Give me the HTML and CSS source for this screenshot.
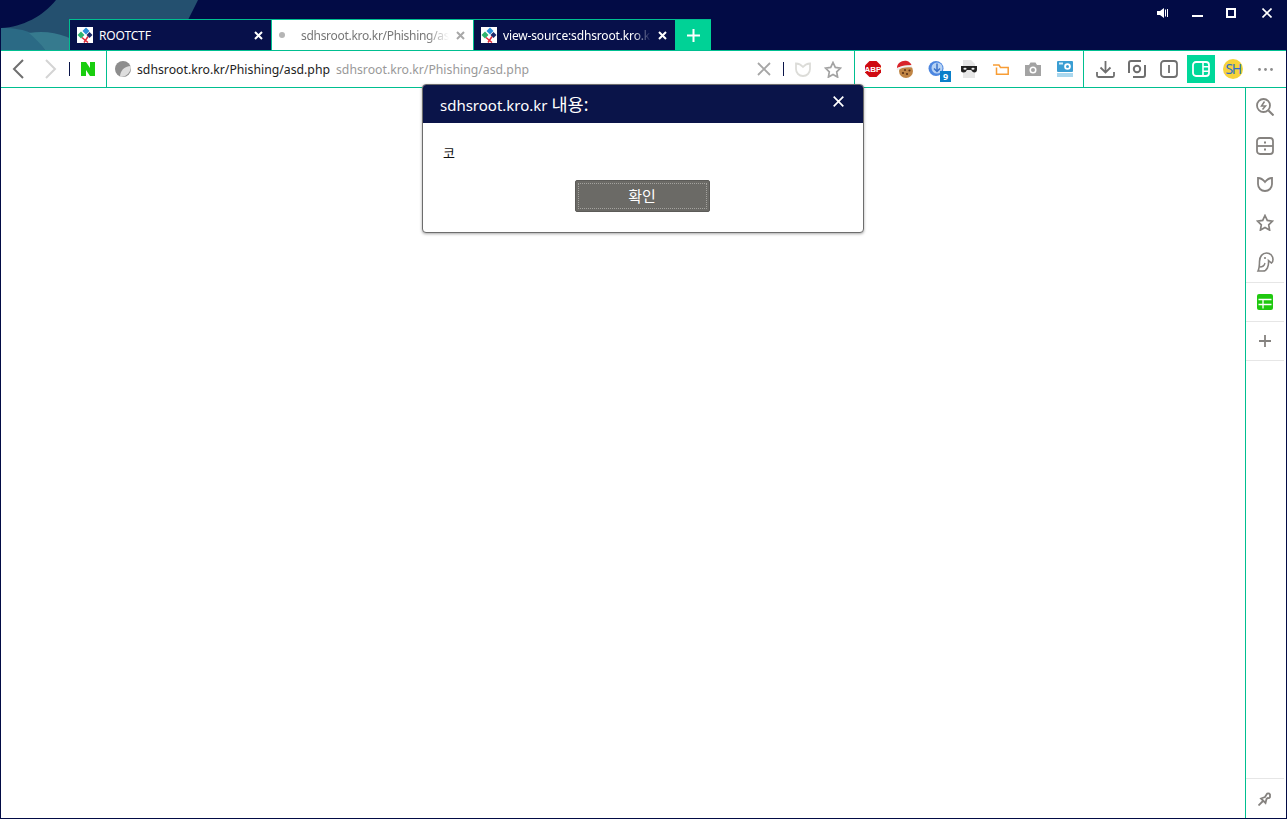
FILE: index.html
```html
<!DOCTYPE html>
<html lang="ko">
<head>
<meta charset="utf-8">
<title>Browser</title>
<link rel="stylesheet" href="styles.css">
</head>
<body>
<div class="window">
  <header class="titlebar">
    <svg class="skin" width="200" height="50" viewBox="0 0 200 50">
      <path d="M55 0H197C193 8 190 14 186 22L168 50H0V28C22 27 42 16 55 0Z" fill="#24506f"/>
      <path d="M0 28C14 28 24 30 30 33 36 38 40 44 44 50H0Z" fill="#2b6a85"/>
      <path d="M28 33C50 29 70 36 90 50H44C40 44 34 38 28 33Z" fill="#367a8e"/>
    </svg>
    <div class="tabs">
      <div class="tab tab-dark">
        <svg class="favicon" width="16" height="16" viewBox="0 0 16 16"><rect width="16" height="16" fill="#fff"/><path d="M0.500 8l3.500-3.500L7.500 8 4 11.500z" fill="#2fb36f"/><path d="M5.500 4l3.500-3.500L12.500 4 9 7.500z" fill="#2a8fd8"/><path d="M9.500 8l3-3 3 3-3 3z" fill="#1c2a6b"/><path d="M5 10.500l6 5M11 9.500l-4 6" stroke="#e02a3a" stroke-width="1.500"/></svg>
        <span class="tab-label">ROOTCTF</span>
        <svg class="tab-close" width="9" height="9" viewBox="0 0 9 9"><path d="M1 1l7 7M8 1L1 8" stroke="#fff" stroke-width="2"/></svg>
      </div>
      <div class="tab tab-light">
        <span class="loading-dot"></span>
        <span class="tab-label fade-light">sdhsroot.kro.kr/Phishing/asd.php</span>
        <svg class="tab-close" width="9" height="9" viewBox="0 0 9 9"><path d="M1 1l7 7M8 1L1 8" stroke="#a8a8a8" stroke-width="2"/></svg>
      </div>
      <div class="tab tab-dark">
        <svg class="favicon" width="16" height="16" viewBox="0 0 16 16"><rect width="16" height="16" fill="#fff"/><path d="M0.500 8l3.500-3.500L7.500 8 4 11.500z" fill="#2fb36f"/><path d="M5.500 4l3.500-3.500L12.500 4 9 7.500z" fill="#2a8fd8"/><path d="M9.500 8l3-3 3 3-3 3z" fill="#1c2a6b"/><path d="M5 10.500l6 5M11 9.500l-4 6" stroke="#e02a3a" stroke-width="1.500"/></svg>
        <span class="tab-label fade-dark">view-source:sdhsroot.kro.kr/Phishing/asd.php</span>
        <svg class="tab-close" width="9" height="9" viewBox="0 0 9 9"><path d="M1 1l7 7M8 1L1 8" stroke="#fff" stroke-width="2"/></svg>
      </div>
      <div class="tab-add">
        <svg width="13" height="13" viewBox="0 0 13 13"><path d="M6.500 0v13M0 6.500h13" stroke="#fff" stroke-width="2"/></svg>
      </div>
    </div>
    <div class="win-controls">
      <svg class="win-vol" width="12" height="10" viewBox="0 0 12 10"><path d="M0 3h3l4-3v10L3 7H0z" fill="#fff"/><path d="M8.500 1.500v7M10.500 1v8" stroke="#fff" stroke-width="1"/></svg>
      <svg class="win-min" width="11" height="2" viewBox="0 0 11 2"><rect width="11" height="2" fill="#fff"/></svg>
      <svg class="win-max" width="10" height="10" viewBox="0 0 10 10"><rect x="1" y="1" width="8" height="8" fill="none" stroke="#fff" stroke-width="2"/></svg>
      <svg class="win-close" width="10" height="10" viewBox="0 0 10 10"><path d="M.5.500l9 9M9.500.500l-9 9" stroke="#fff" stroke-width="1.600"/></svg>
    </div>
  </header>

  <nav class="toolbar">
    <div class="nav-group">
      <span class="nav-btn">
        <svg width="14" height="20" viewBox="0 0 14 20"><path d="M12 1L3 10l9 9" fill="none" stroke="#6f6f6f" stroke-width="2"/></svg>
      </span>
      <span class="nav-btn">
        <svg width="14" height="20" viewBox="0 0 14 20"><path d="M2 1l9 9-9 9" fill="none" stroke="#d4d4d4" stroke-width="2"/></svg>
      </span>
      <span class="divider"></span>
      <svg class="naver" width="14" height="14" viewBox="0 0 14 14"><path d="M0 0h5l4 6V0h5v14H9L5 8v6H0z" fill="#19ce0f"/></svg>
    </div>
    <div class="address">
      <svg class="site-icon" width="16" height="16" viewBox="0 0 16 16"><circle cx="8" cy="8" r="8" fill="#8d8d8d"/><path d="M5 16c0-6 4-11 11-11 0 6-4 11-11 11z" fill="#dedede"/></svg>
      <span class="url">sdhsroot.kro.kr/Phishing/asd.php</span>
      <span class="url-hint">sdhsroot.kro.kr/Phishing/asd.php</span>
      <span class="spacer"></span>
      <svg class="addr-x" width="14" height="14" viewBox="0 0 14 14"><path d="M1 1l12 12M13 1L1 13" stroke="#a6a6a6" stroke-width="1.800"/></svg>
      <span class="divider addr-div"></span>
      <svg class="addr-shield" width="16" height="15" viewBox="0 0 16 15"><path d="M1 1.500c2.500 0 5 1.200 7 3.500 2-2.300 4.500-3.500 7-3.500v5.500c0 4-3 7-7 7s-7-3-7-7z" fill="none" stroke="#dcdcd8" stroke-width="1.800"/></svg>
      <svg class="addr-star" width="18" height="17" viewBox="0 0 18 17"><path d="M9 1.500l2.300 4.900 5.200.7-3.800 3.700.9 5.300L9 13.500l-4.600 2.600.9-5.300L1.500 7.100l5.200-.7z" fill="none" stroke="#a3a3a3" stroke-width="1.700"/></svg>
    </div>
    <div class="ext-group">
      <span class="tool"><svg width="18" height="18" viewBox="0 0 18 18"><path d="M5.500 1h7L17 5.500v7L12.500 17h-7L1 12.500v-7z" fill="#cf0a12"/><text x="9" y="12" class="abp-text">ABP</text></svg></span>
      <span class="tool"><svg width="18" height="18" viewBox="0 0 18 18"><circle cx="10" cy="11" r="7" fill="#c08545"/><circle cx="7" cy="13" r="1.100" fill="#5c3216"/><circle cx="11" cy="14" r="1.100" fill="#5c3216"/><circle cx="13.500" cy="10.500" r="1.100" fill="#5c3216"/><circle cx="9" cy="10" r="1" fill="#5c3216"/><path d="M1 8C1 3 6 0 11 1c2 .5 3.500 2 4.500 4C10 4.500 5 6 1 8z" fill="#d8232a"/><path d="M0.500 8.500C5 5.500 11 4.500 16 5.500V7.500C11 6.500 5 7.500 1 10.500z" fill="#eee"/></svg></span>
      <span class="tool badge-host"><svg width="18" height="18" viewBox="0 0 18 18"><circle cx="8" cy="8.500" r="7.500" fill="#4c86e0"/><circle cx="9" cy="8" r="5.500" fill="#b6d2f4"/><path d="M9 3.500v7M6 8.500l3 3 3-3" fill="none" stroke="#3a71c8" stroke-width="1.500"/></svg><span class="badge">9</span></span>
      <span class="tool"><svg width="18" height="18" viewBox="0 0 18 18"><path d="M3 0h8l4 4v14H3z" fill="#e6e6e6"/><path d="M1 6h16v3.500c0 2-1 3-2.500 3S12 11 11 10H7c-1 1-1 2.500-3.500 2.500S1 11.500 1 9.500z" fill="#222"/><ellipse cx="5" cy="8.800" rx="1.600" ry="1" fill="#eee"/><ellipse cx="13" cy="8.800" rx="1.600" ry="1" fill="#eee"/></svg></span>
      <span class="tool"><svg width="16" height="11" viewBox="0 0 16 11"><path d="M0 1h6l1.500 2.500H15.200V10.200H3.500V3.500" fill="none" stroke="#f89d35" stroke-width="1.500"/></svg></span>
      <span class="tool"><svg width="16" height="14" viewBox="0 0 16 14"><path d="M0 3h4l1.500-2.500h5L12 3h4v11H0z" fill="#a3a3a3"/><circle cx="8" cy="8" r="3.500" fill="#fff"/><circle cx="8" cy="8" r="2" fill="#a3a3a3"/></svg></span>
      <span class="tool"><svg width="16" height="16" viewBox="0 0 16 16"><rect width="16" height="11" y="0" rx="1" fill="#3a9ed3"/><rect x="2" y="1.500" width="4" height="2" fill="#d6eefa"/><circle cx="10.500" cy="5.500" r="3.300" fill="#fff"/><circle cx="10.500" cy="5.500" r="1.500" fill="#3a9ed3"/><rect y="12" width="16" height="4" fill="#a9d7ee"/></svg></span>
    </div>
    <div class="tool-group">
      <span class="tool"><svg width="19" height="18" viewBox="0 0 19 18"><path d="M9.500 1v11M4.500 7.500l5 5 5-5M1 12v3.500c0 1 .5 1.500 1.500 1.500h14c1 0 1.500-.5 1.500-1.500V12" fill="none" stroke="#6f6f6f" stroke-width="1.800"/></svg></span>
      <span class="tool"><svg width="18" height="18" viewBox="0 0 18 18"><path d="M13 1H3C2 1 1 2 1 3v10M5 17h10c1 0 2-1 2-2V5" fill="none" stroke="#6f6f6f" stroke-width="2"/><circle cx="9" cy="9" r="3.200" fill="none" stroke="#6f6f6f" stroke-width="2"/></svg></span>
      <span class="tool"><svg width="18" height="18" viewBox="0 0 18 18"><rect x="1" y="1" width="16" height="16" rx="3" fill="none" stroke="#6f6f6f" stroke-width="1.800"/><path d="M9 5v8" stroke="#6f6f6f" stroke-width="1.800"/></svg></span>
      <span class="tool tool-active"><svg width="18" height="16" viewBox="0 0 18 16"><rect x="1" y="1" width="16" height="14" rx="3" fill="none" stroke="#fff" stroke-width="1.800"/><path d="M11 1v14M11 5.700h6M11 10.300h6" fill="none" stroke="#fff" stroke-width="1.600"/></svg></span>
      <span class="tool"><span class="avatar">SH</span></span>
      <span class="tool"><svg width="15" height="3" viewBox="0 0 15 3"><circle cx="1.500" cy="1.500" r="1.400" fill="#8c8c8c"/><circle cx="7.500" cy="1.500" r="1.400" fill="#8c8c8c"/><circle cx="13.500" cy="1.500" r="1.400" fill="#8c8c8c"/></svg></span>
    </div>
  </nav>

  <div class="main">
    <section class="content">
      <div class="dialog">
        <div class="dialog-head">
          <span class="dialog-title">sdhsroot.kro.kr <span class="dialog-title-ko">내용:</span></span>
          <svg width="11" height="11" viewBox="0 0 11 11"><path d="M.7.700l9.600 9.600M10.300.700L.7 10.300" stroke="#fff" stroke-width="1.700"/></svg>
        </div>
        <div class="dialog-body">
          <p class="dialog-msg">코</p>
          <div class="dialog-actions"><button class="ok-btn" type="button"><span class="ok-label">확인</span></button></div>
        </div>
      </div>
    </section>
    <aside class="sidebar">
      <span class="side-item side-up"><svg width="18" height="18" viewBox="0 0 18 18"><circle cx="7.500" cy="7.500" r="6.500" fill="none" stroke="#85827f" stroke-width="1.800"/><path d="M12.500 12.500l5 5" stroke="#85827f" stroke-width="2"/><path d="M8.500 3.500L5.500 8h4l-3 3.500" fill="none" stroke="#85827f" stroke-width="1.500"/></svg></span>
      <span class="side-item side-up"><svg width="18" height="18" viewBox="0 0 18 18"><rect x="1" y="1" width="16" height="16" rx="3" fill="none" stroke="#85827f" stroke-width="1.800"/><path d="M1 9h16" stroke="#85827f" stroke-width="1.800"/><rect x="8" y="4.500" width="2" height="2" fill="#85827f"/><rect x="8" y="11.500" width="2" height="2" fill="#85827f"/></svg></span>
      <span class="side-item side-up"><svg width="16" height="15" viewBox="0 0 16 15"><path d="M1 1c2.500 0 5 1.500 7 4 2-2.500 4.500-4 7-4v6c0 4-3 7-7 7s-7-3-7-7z" fill="none" stroke="#85827f" stroke-width="1.800"/></svg></span>
      <span class="side-item side-star"><svg width="18" height="17" viewBox="0 0 18 17"><path d="M9 1.500l2.300 4.900 5.200.7-3.800 3.700.9 5.300L9 13.500l-4.600 2.600.9-5.300L1.500 7.100l5.200-.7z" fill="none" stroke="#85827f" stroke-width="1.700"/></svg></span>
      <span class="side-item side-sep side-up"><svg width="18" height="20" viewBox="0 0 18 20"><path d="M2 19C3.500 16 3.500 13 3.500 9.500 3.500 4.500 6.500 1 10.500 1S17 4 17 7.500c0 1.500-.5 3-1.500 3.500L12.500 8.500C13 14 11 19 7 19z" fill="none" stroke="#85827f" stroke-width="1.600"/><circle cx="9" cy="6" r="1.100" fill="#85827f"/><path d="M3.500 15c3 0 5-1.500 5.500-4" fill="none" stroke="#85827f" stroke-width="1.300"/></svg></span>
      <span class="side-item side-sep"><svg width="16" height="16" viewBox="0 0 16 16"><rect width="16" height="16" rx="2" fill="#1fc90f"/><path d="M1.500 5.500h13M1.500 10.500h13M6 5.500v9" stroke="#fff" stroke-width="1.300"/></svg></span>
      <span class="side-item side-sep"><svg width="12" height="12" viewBox="0 0 12 12"><path d="M6 0v12M0 6h12" stroke="#85827f" stroke-width="1.800"/></svg></span>
      <span class="spacer"></span>
      <span class="side-pin"><svg width="14" height="14" viewBox="0 0 14 14"><path d="M0.500 13.500l4.500-4.500" stroke="#85827f" stroke-width="1.800"/><path d="M3 6.500L7 5 8.500 2.500a2 2 0 0 1 3.500 0L12 5a2 2 0 0 1-2.500 1L8.500 7 7.500 11z" fill="none" stroke="#85827f" stroke-width="1.800"/></svg></span>
    </aside>
  </div>
</div>
</body>
</html>
```
FILE: styles.css
```css
* { box-sizing: border-box; }
html, body { margin: 0; height: 100%; }
body { font-family: "Noto Sans", "Noto Sans CJK KR", sans-serif; background: #fff; overflow: hidden; }
svg { display: block; flex: none; }

.window { height: 819px; width: 1287px; display: flex; flex-direction: column; border: 1px solid #020b45; border-top: 0; background: #fff; position: relative; overflow: hidden; }

.titlebar { height: 51px; flex: none; background: #020b45; border-bottom: 1px solid #00bf90; position: relative; display: flex; align-items: flex-start; justify-content: space-between; }
.skin { position: absolute; left: 0; top: 0; }
.tabs { position: relative; display: flex; margin: 19px 0 0 68px; height: 31px; }
.tab { width: 202px; height: 31px; display: flex; align-items: center; padding: 0 8px 0 7px; border: 1px solid #00bf90; border-bottom: 0; border-left-width: 0; }
.tab:first-child { border-left-width: 1px; width: 203px; }
.tab-dark { background: #07104a; color: #fff; }
.tab-light { background: #fff; color: #777; }
.favicon { margin-right: 6px; }
.tab-label { flex: 1; font-size: 12px; white-space: nowrap; overflow: hidden; min-width: 0; letter-spacing: -0.15px; }
.fade-light { letter-spacing: -0.3px; -webkit-mask-image: linear-gradient(to right, #000 85%, transparent); mask-image: linear-gradient(to right, #000 85%, transparent); }
.fade-dark { -webkit-mask-image: linear-gradient(to right, #000 88%, transparent); mask-image: linear-gradient(to right, #000 88%, transparent); }
.tab-close { margin-left: 7px; }
.loading-dot { width: 6px; height: 6px; border-radius: 50%; background: #b5b5b5; margin-right: 16px; }
.tab-add { width: 36px; height: 31px; background: #00d296; display: flex; align-items: center; justify-content: center; border-top: 1px solid #00bf90; margin-left: -1px; }

.win-controls { position: relative; display: flex; align-items: center; height: 25px; }
.win-vol { margin-right: 23px; }
.win-min { margin-top: 7px; margin-right: 23px; }
.win-max { margin-right: 26px; }
.win-close { margin-right: 14px; }

.toolbar { height: 37px; flex: none; display: flex; border-bottom: 1px solid #00bf90; background: #fff; }
.nav-group { width: 106px; flex: none; display: flex; align-items: center; padding-left: 10px; border-right: 1px solid #00bf90; }
.nav-btn { width: 33px; display: flex; justify-content: flex-start; }
.divider { width: 1px; height: 14px; background: #0a1449; flex: none; }
.nav-group .divider { margin-left: -8px; margin-right: 11px; }
.address { flex: 1; min-width: 0; display: flex; align-items: center; padding-left: 8px; border-right: 1px solid #00bf90; }
.site-icon { margin-right: 6px; }
.url { font-size: 12.250px; color: #222; white-space: nowrap; margin-right: 6px; }
.url-hint { font-size: 12.250px; color: #999; white-space: nowrap; }
.spacer { flex: 1; }
.addr-x { margin-right: 12px; }
.addr-div { margin-right: 11px; }
.addr-shield { margin-right: 13px; }
.addr-star { margin-right: 12px; }

.ext-group { width: 229px; flex: none; display: flex; align-items: center; padding-left: 2px; border-right: 1px solid #00bf90; }
.tool-group { flex: none; width: 202px; display: flex; align-items: center; padding-left: 5px; }
.tool { width: 32px; height: 28px; flex: none; display: flex; align-items: center; justify-content: center; position: relative; }
.tool-active { background: #00d89a; width: 28px; margin: 0 2px; }
.abp-text { font-family: "Liberation Sans", sans-serif; font-size: 8px; font-weight: 700; fill: #fff; text-anchor: middle; }
.badge { position: absolute; right: 2px; bottom: 1px; width: 11px; height: 11px; background: #0a7fc9; color: #fff; font-size: 9px; font-weight: 700; line-height: 11px; text-align: center; }
.avatar { width: 20px; height: 20px; border-radius: 50%; background: #f6d23a; color: #2f6fc8; font-size: 14px; line-height: 20px; text-align: center; letter-spacing: -1.5px; }

.main { flex: 1; min-height: 0; display: flex; }
.content { flex: 1; position: relative; background: #fff; }
.dialog { position: absolute; left: 421px; top: -4px; width: 442px; height: 149px; background: #fff; border: 1px solid #6d6d6d; border-radius: 4px; box-shadow: 0 1px 3px rgba(0,0,0,.35); overflow: hidden; display: flex; flex-direction: column; }
.dialog-head { height: 38px; flex: none; background: #0a1449; color: #fff; display: flex; align-items: center; justify-content: space-between; padding: 0 19px 2px 17px; }
.dialog-head svg { margin-top: -4px; }
.dialog-title { font-size: 15px; }
.dialog-title-ko { font-size: 17.500px; }
.dialog-body { flex: 1; padding: 22px 20px 0; }
.dialog-msg { margin: 0; font-size: 13px; line-height: 17px; color: #111; }
.dialog-actions { display: flex; justify-content: center; margin-top: 18px; padding-right: 2px; }
.ok-btn { width: 135px; height: 32px; padding: 2px; background: #6b6a66; border: 1px solid #5c5b58; border-radius: 2px; font: inherit; color: #fff; }
.ok-label { display: flex; align-items: center; justify-content: center; height: 100%; padding-bottom: 2px; border: 1px dotted #a3a29e; font-size: 15px; }

.sidebar { width: 41px; flex: none; border-left: 1px solid #00bf90; padding-right: 2px; display: flex; flex-direction: column; background: #fff; }
.side-item { height: 39px; flex: none; display: flex; align-items: center; justify-content: center; }
.side-up { padding-bottom: 2px; }
.side-star { padding-bottom: 4px; }
.side-sep { border-bottom: 1px solid #e6e6e6; }
.side-pin { height: 40px; flex: none; display: flex; align-items: center; justify-content: center; border-top: 1px solid #e6e6e6; }
```
